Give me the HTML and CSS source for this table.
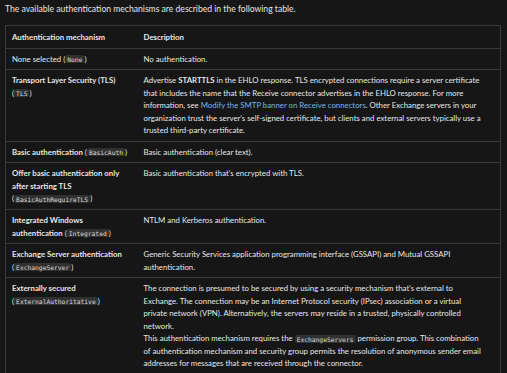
FILE: index.html
```html
<!DOCTYPE html>
<html lang="en">
<head>
  <meta charset="UTF-8" />
  <title>Receive connector authentication</title>
  <link rel="stylesheet" href="styles.css">
</head>
<body>
  <p class="intro">The available authentication mechanisms are described in the following table.</p>

  <table class="auth-table">
    <colgroup>
      <col class="col-name">
      <col>
    </colgroup>
    <thead>
      <tr>
        <th>Authentication mechanism</th>
        <th>Description</th>
      </tr>
    </thead>
    <tbody>
      <tr>
        <td>None selected (<code>None</code>)</td>
        <td>No authentication.</td>
      </tr>
      <tr>
        <td><strong>Transport Layer Security (TLS)</strong><br>(<code>TLS</code>)</td>
        <td>Advertise <strong>STARTTLS</strong> in the EHLO response. TLS encrypted connections require a server certificate that includes the name that the Receive connector advertises in the EHLO response. For more information, see <a href="#">Modify the SMTP banner on Receive connectors</a>. Other Exchange servers in your organization trust the server's self-signed certificate, but clients and external servers typically use a trusted third-party certificate.</td>
      </tr>
      <tr>
        <td><strong>Basic authentication</strong> (<code>BasicAuth</code>)</td>
        <td>Basic authentication (clear text).</td>
      </tr>
      <tr>
        <td><strong>Offer basic authentication only after starting TLS</strong><br>(<code>BasicAuthRequireTLS</code>)</td>
        <td>Basic authentication that's encrypted with TLS.</td>
      </tr>
      <tr>
        <td><strong>Integrated Windows authentication</strong> (<code>Integrated</code>)</td>
        <td>NTLM and Kerberos authentication.</td>
      </tr>
      <tr>
        <td><strong>Exchange Server authentication</strong><br>(<code>ExchangeServer</code>)</td>
        <td>Generic Security Services application programming interface (GSSAPI) and Mutual GSSAPI authentication.</td>
      </tr>
      <tr>
        <td><strong>Externally secured</strong><br>(<code>ExternalAuthoritative</code>)</td>
        <td>The connection is presumed to be secured by using a security mechanism that's external to Exchange. The connection may be an Internet Protocol security (IPsec) association or a virtual private network (VPN). Alternatively, the servers may reside in a trusted, physically controlled network.<br>This authentication mechanism requires the <code>ExchangeServers</code> permission group. This combination of authentication mechanism and security group permits the resolution of anonymous sender email addresses for messages that are received through the connector.</td>
      </tr>
    </tbody>
  </table>
</body>
</html>
```

FILE: styles.css
```css
body {
  font-family: Lato, 'Liberation Sans', sans-serif;
  margin: 0;
  padding: 0 6px 0 5px;
  background-color: #161616;
  color: #e6e6e6;
}
.intro {
  font-size: 8.6px;
  line-height: 12px;
  margin: 3px 0 10px 0;
}
.auth-table {
  width: 100%;
  table-layout: fixed;
  border-collapse: collapse;
  border: 1px solid #3a3a3a;
  font-size: 7.8px;
  line-height: 12.55px;
}
.auth-table .col-name {
  width: 132px;
}
.auth-table th,
.auth-table td {
  text-align: left;
  vertical-align: top;
  padding: 4px 14px 4px 6px;
  border-top: 1px solid #3a3a3a;
}
.auth-table th {
  padding-top: 5px;
}
.auth-table td:first-child {
  padding-right: 6px;
}
.auth-table td strong,
.auth-table th {
  font-weight: 700;
}
.auth-table a {
  color: #75b6e7;
  text-decoration: none;
}
code {
  font-family: 'DejaVu Sans Mono', 'Liberation Mono', monospace;
  font-size: 6.3px;
  line-height: 8px;
  background: #303030;
  color: #d8d8d8;
  padding: 0.5px 2px;
  border-radius: 2px;
}
```
